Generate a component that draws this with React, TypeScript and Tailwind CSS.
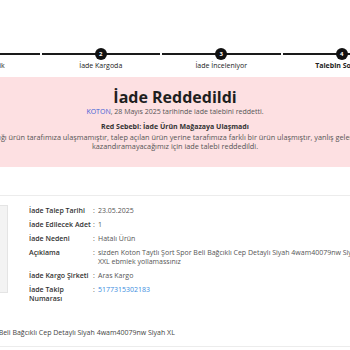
import React from "react";

type Step = { no: number; label: string; active?: boolean };

const steps: Step[] = [
  { no: 1, label: "Kargoya Verdik" },
  { no: 2, label: "İade Kargoda" },
  { no: 3, label: "İade İnceleniyor" },
  { no: 4, label: "Talebin Sonucu", active: true },
];

const details: { label: string; value: React.ReactNode }[] = [
  { label: "İade Talep Tarihi", value: "23.05.2025" },
  { label: "İade Edilecek Adet", value: "1" },
  { label: "İade Nedeni", value: "Hatalı Ürün" },
  {
    label: "Açıklama",
    value: (
      <>
        <span className="whitespace-nowrap">
          sizden Koton Taytlı Şort Spor Beli Bağcıklı Cep Detaylı Siyah 4wam40079nw Siyah
        </span>
        <br />
        XXL ebmiek yollamassınız
      </>
    ),
  },
  { label: "İade Kargo Şirketi", value: "Aras Kargo" },
  {
    label: "İade Takip Numarası",
    value: <span className="text-[#3b8de0]">5177315302183</span>,
  },
];

function Stepper() {
  return (
    <div className="flex pt-[48px] -ml-[80px]">
      {steps.map((s) => (
        <div key={s.no} className="flex w-[120.5px] shrink-0 flex-col items-center">
          <div className="relative flex h-[12px] w-full items-center justify-center">
            <div className="absolute left-[1px] right-[1px] top-[5px] h-[2px] bg-[#1a1a1a]" />
            <div className="relative flex h-[12px] w-[12px] items-center justify-center rounded-full bg-[#111] text-[6px] font-bold leading-none text-white">
              {s.no}
            </div>
          </div>
          <span
            className={
              s.active
                ? "mt-[1px] whitespace-nowrap text-[7px] font-bold text-[#222]"
                : "mt-[1px] whitespace-nowrap text-[7px] text-[#222]"
            }
          >
            {s.label}
          </span>
        </div>
      ))}
    </div>
  );
}

export default function App() {
  return (
    <div
      className="relative h-[350px] w-[350px] overflow-hidden bg-white"
      style={{ fontFamily: '"Open Sans", "Noto Sans", sans-serif' }}
    >
      <Stepper />

      <div className="mt-[5px] flex h-[90px] justify-center bg-[#fde0e2] pt-[10px]">
        <div className="flex w-[560px] shrink-0 flex-col items-center text-center">
          <h1 className="text-[16px] font-bold leading-[20px] text-[#1f1f1f]">İade Reddedildi</h1>
          <p className="text-[7px] leading-[10px] text-[#555]">
            <span className="text-[#3d5fd6]">KOTON</span>, 28 Mayıs 2025 tarihinde iade talebini reddetti.
          </p>
          <p className="mt-[5px] text-[7px] font-bold leading-[10px] text-[#333]">
            Red Sebebi: İade Ürün Mağazaya Ulaşmadı
          </p>
          <p className="mt-[1.5px] whitespace-nowrap text-[7.3px] leading-[9px] text-[#555]">
            Tarafınızca iade talebi açtığı ürün tarafımıza ulaşmamıştır, talep açılan ürün yerine tarafımıza farklı bir ürün ulaşmıştır, yanlış gelen ürün için size iade hakkı
            <br />
            kazandıramayacağımız için iade talebi reddedildi.
          </p>
        </div>
      </div>

      <div className="mt-[28px] h-px bg-[#ececec]" />

      <div className="flex pt-[9px]">
        <div className="h-[88px] w-[8px] shrink-0 border border-l-0 border-[#e4e4e4] bg-[#f3f3f3]" />
        <div className="ml-[21px] flex w-[300px] shrink-0 flex-col gap-[5px] pt-[1px] text-[7px] leading-[9px]">
          {details.map((d) => (
            <div key={d.label} className="flex">
              <span className="w-[64px] shrink-0 font-semibold text-[#333]">{d.label}</span>
              <span className="w-[5px] shrink-0 text-[#555]">:</span>
              <span className="text-[#555]">{d.value}</span>
            </div>
          ))}
        </div>
      </div>

      <div className="mt-[25px] -ml-[74px] whitespace-nowrap text-[7px] leading-[9px] text-[#444]">
        Koton Taytlı Şort Spor Beli Bağcıklı Cep Detaylı Siyah 4wam40079nw Siyah XL
      </div>

      <div className="mt-[9px] h-px bg-[#ececec]" />
    </div>
  );
}
